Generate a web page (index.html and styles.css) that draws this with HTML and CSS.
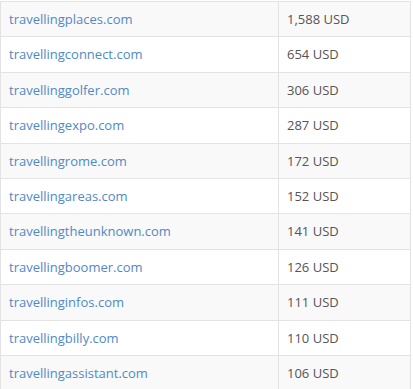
FILE: index.html
```html
<!DOCTYPE html>
<html>
<head>
<meta charset="utf-8">
<link rel="stylesheet" href="styles.css">
</head>
<body>
<table class="domains">
  <tbody>
    <tr><td class="name"><a href="#">travellingplaces.com</a></td><td class="price">1,588 USD</td></tr>
    <tr><td class="name"><a href="#">travellingconnect.com</a></td><td class="price">654 USD</td></tr>
    <tr><td class="name"><a href="#">travellinggolfer.com</a></td><td class="price">306 USD</td></tr>
    <tr><td class="name"><a href="#">travellingexpo.com</a></td><td class="price">287 USD</td></tr>
    <tr><td class="name"><a href="#">travellingrome.com</a></td><td class="price">172 USD</td></tr>
    <tr><td class="name"><a href="#">travellingareas.com</a></td><td class="price">152 USD</td></tr>
    <tr><td class="name"><a href="#">travellingtheunknown.com</a></td><td class="price">141 USD</td></tr>
    <tr><td class="name"><a href="#">travellingboomer.com</a></td><td class="price">126 USD</td></tr>
    <tr><td class="name"><a href="#">travellinginfos.com</a></td><td class="price">111 USD</td></tr>
    <tr><td class="name"><a href="#">travellingbilly.com</a></td><td class="price">110 USD</td></tr>
    <tr><td class="name"><a href="#">travellingassistant.com</a></td><td class="price">106 USD</td></tr>
  </tbody>
</table>
</body>
</html>
```
FILE: styles.css
```css
html, body {
  margin: 0;
  padding: 0;
  background: #fff;
}
body {
  padding: 1px 0 0 0;
  font-family: "Open Sans", "Liberation Sans", sans-serif;
  font-size: 13px;
  line-height: 18.4px;
  color: #555;
}
.domains {
  border-collapse: collapse;
  width: 411px;
  border: 1px solid #e3e3e3;
}
.domains td {
  padding: 8px 8px;
  border: 1px solid #e3e3e3;
  vertical-align: top;
}
.domains tr:nth-child(odd) td {
  background: #f9f9f9;
}
.domains td.name {
  width: 261px;
}
.domains a {
  color: #5089c6;
  text-decoration: none;
}
```
